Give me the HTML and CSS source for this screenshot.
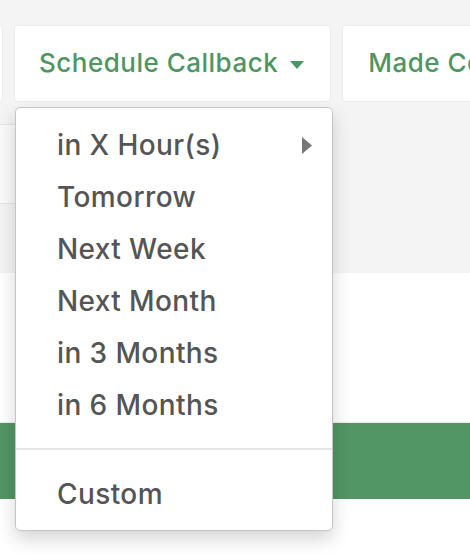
FILE: index.html
```html
<!DOCTYPE html>
<html>
<head>
<meta charset="utf-8">
<link rel="stylesheet" href="styles.css">
</head>
<body>
<div class="page">
  <section class="top">
    <div class="cards">
      <div class="card card-prev"></div>
      <div class="card card-main">
        <span class="card-label">Schedule Callback</span>
        <svg class="caret" width="14" height="8" viewBox="0 0 14 8"><path d="M0 0H14L7 8Z" fill="#4f9562"/></svg>
      </div>
      <div class="card card-next"><span class="card-label">Made Contact</span></div>
    </div>
    <div class="strip"></div>
  </section>
  <section class="middle"></section>
  <section class="bar"></section>
  <section class="bottom"></section>

  <ul class="menu">
    <li class="item has-sub">
      <span>in X Hour(s)</span>
      <svg class="sub-arrow" width="10" height="17" viewBox="0 0 10 17"><path d="M0 0L10 8.5L0 17Z" fill="#777"/></svg>
    </li>
    <li class="item">Tomorrow</li>
    <li class="item">Next Week</li>
    <li class="item">Next Month</li>
    <li class="item">in 3 Months</li>
    <li class="item">in 6 Months</li>
    <li class="divider"></li>
    <li class="item">Custom</li>
  </ul>
</div>
</body>
</html>
```
FILE: styles.css
```css
html, body {
  margin: 0;
  padding: 0;
}
body {
  font-family: "Inter", "DejaVu Sans", sans-serif;
  background: #ffffff;
  overflow: hidden;
}
.page {
  position: relative;
  width: 470px;
  height: 554px;
  overflow: hidden;
}
.top {
  background: #f4f4f4;
  height: 273px;
  padding-top: 25px;
  box-sizing: border-box;
}
.cards {
  display: flex;
  gap: 11px;
  margin-left: -100px;
}
.card {
  flex: none;
  height: 77px;
  background: #ffffff;
  border: 1px solid #ebebeb;
  border-radius: 4px;
  box-sizing: border-box;
  display: flex;
  align-items: center;
}
.card-prev {
  width: 103px;
}
.card-main {
  padding: 0 26px 0 24px;
  gap: 12px;
}
.card-next {
  padding-left: 25px;
  width: 200px;
}
.card-label {
  font-size: 26px;
  font-weight: 500;
  letter-spacing: 0.5px;
  color: #4f9562;
  white-space: nowrap;
  line-height: 1;
  padding-bottom: 2px;
}
.caret {
  display: block;
  margin-top: 2px;
}
.strip {
  margin-top: 22px;
  width: 320px;
  height: 80px;
  background: #fafafa;
  border-top: 1px solid #e4e4e4;
  border-bottom: 1px solid #e4e4e4;
  box-sizing: border-box;
}
.middle {
  height: 149px;
  background: #ffffff;
  border-bottom: 1px solid #ececec;
}
.bar {
  height: 76px;
  background: #529663;
}
.bottom {
  height: 60px;
  background: #ffffff;
}
.menu {
  position: absolute;
  top: 107px;
  left: 15px;
  width: 318px;
  margin: 0;
  padding: 11px 0 10px;
  list-style: none;
  background: #ffffff;
  border: 1px solid #c4c4c4;
  border-radius: 5px;
  box-shadow: 0 8px 18px rgba(0, 0, 0, 0.17);
  box-sizing: border-box;
}
.item {
  height: 52px;
  display: flex;
  align-items: center;
  justify-content: space-between;
  padding: 0 20px 0 41px;
  font-size: 28px;
  font-weight: 500;
  letter-spacing: 0.4px;
  color: #555555;
  white-space: nowrap;
}
.sub-arrow {
  display: block;
}
.divider {
  height: 2px;
  margin: 17px 0 18px;
  background: #e5e5e5;
}
```
